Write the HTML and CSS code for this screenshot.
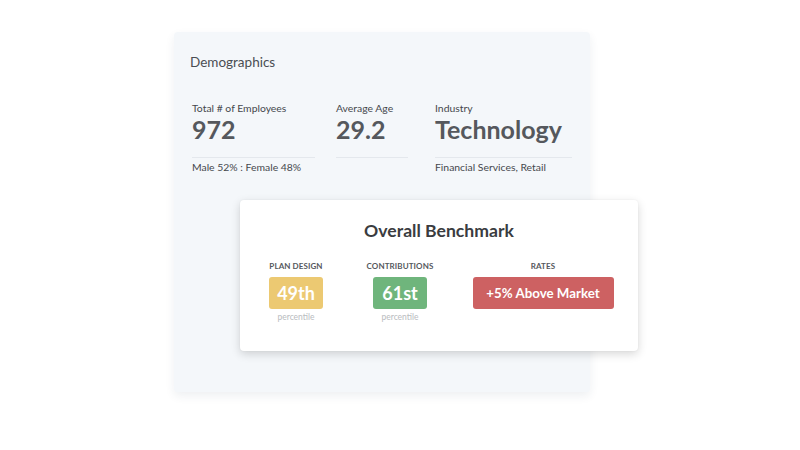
FILE: index.html
```html
<!DOCTYPE html>
<html>
<head>
<meta charset="utf-8">
<link rel="stylesheet" href="styles.css">
</head>
<body>
<div class="stage">
  <div class="demo-card">
    <div class="demo-title">Demographics</div>
    <div class="stats">
      <div class="stat">
        <div class="stat-label">Total # of Employees</div>
        <div class="stat-value">972</div>
        <div class="stat-rule rule-1"></div>
        <div class="stat-sub">Male 52% : Female 48%</div>
      </div>
      <div class="stat">
        <div class="stat-label">Average Age</div>
        <div class="stat-value">29.2</div>
        <div class="stat-rule rule-2"></div>
        <div class="stat-sub"></div>
      </div>
      <div class="stat">
        <div class="stat-label">Industry</div>
        <div class="stat-value">Technology</div>
        <div class="stat-rule rule-3"></div>
        <div class="stat-sub">Financial Services, Retail</div>
      </div>
    </div>
    <div class="bench-card">
      <div class="bench-title">Overall Benchmark</div>
      <div class="bench-cols">
        <div class="bench-col">
          <div class="bench-label">PLAN DESIGN</div>
          <div class="badge badge-yellow">49th</div>
          <div class="bench-note">percentile</div>
        </div>
        <div class="bench-col">
          <div class="bench-label">CONTRIBUTIONS</div>
          <div class="badge badge-green">61st</div>
          <div class="bench-note">percentile</div>
        </div>
        <div class="bench-col">
          <div class="bench-label">RATES</div>
          <div class="badge badge-red">+5% Above Market</div>
        </div>
      </div>
    </div>
  </div>
</div>
</body>
</html>
```
FILE: styles.css
```css
html, body {
  margin: 0;
  padding: 0;
  background: #ffffff;
  font-family: Lato, "Open Sans", sans-serif;
}
.stage {
  width: 800px;
  height: 450px;
  padding: 32px 0 0 174px;
  box-sizing: border-box;
}
.demo-card {
  position: relative;
  width: 416px;
  height: 360px;
  box-sizing: border-box;
  background: #f4f7fa;
  border-radius: 4px;
  box-shadow: 0 4px 10px rgba(40, 60, 90, 0.08);
  padding: 21px 18px 0 16px;
}
.demo-title {
  font-size: 13.5px;
  line-height: 18px;
  color: #4a4d52;
}
.stats {
  display: grid;
  grid-template-columns: 144px 99px 1fr;
  margin: 30px 0 0 2px;
}
.stat-label {
  font-size: 10.4px;
  line-height: 14px;
  color: #45484d;
}
.stat-value {
  font-size: 25px;
  font-weight: 700;
  line-height: 30px;
  color: #55585d;
  margin-top: -1px;
}
.stat-rule {
  height: 1px;
  background: #e4e8ed;
  margin-top: 13px;
}
.rule-1 { width: 123px; }
.rule-2 { width: 72px; }
.rule-3 { width: 137px; }
.stat-sub {
  font-size: 10.4px;
  line-height: 14px;
  color: #45484d;
  margin-top: 2px;
}
.bench-card {
  position: absolute;
  left: 66px;
  top: 168px;
  width: 398px;
  height: 151px;
  background: #ffffff;
  border-radius: 4px;
  box-shadow: 0 3px 10px rgba(0, 0, 0, 0.16), 0 0 2px rgba(0, 0, 0, 0.06);
}
.bench-title {
  text-align: center;
  font-size: 17.6px;
  font-weight: 700;
  color: #3a3c40;
  line-height: 22px;
  margin-top: 20px;
}
.bench-cols {
  display: grid;
  grid-template-columns: 112px 96px 1fr;
  margin-top: 19px;
}
.bench-col {
  display: flex;
  flex-direction: column;
  align-items: center;
}
.bench-label {
  font-size: 8px;
  font-weight: 700;
  line-height: 10px;
  color: #55585d;
  letter-spacing: 0.1px;
}
.badge {
  margin-top: 6px;
  height: 32px;
  line-height: 32px;
  border-radius: 3px;
  color: #ffffff;
  font-size: 18px;
  font-weight: 700;
  text-align: center;
}
.badge-yellow {
  width: 54px;
  background: #ecc972;
}
.badge-green {
  width: 54px;
  background: #6fb57c;
}
.badge-red {
  width: 141px;
  font-size: 13.3px;
  background: #cd6162;
}
.bench-note {
  font-size: 8.5px;
  line-height: 10px;
  color: #b9bcc0;
  margin-top: 3px;
}
```
